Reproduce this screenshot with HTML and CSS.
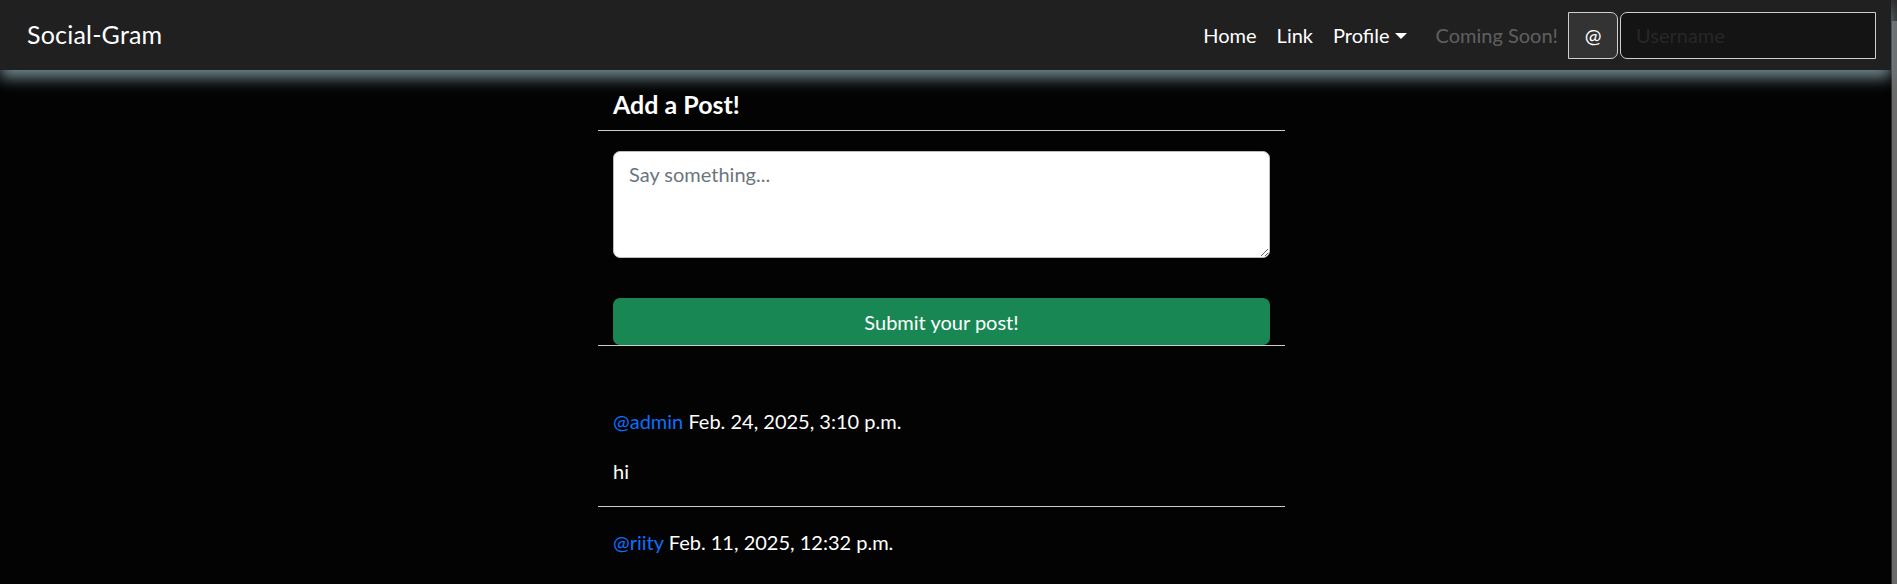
FILE: index.html
```html
<!DOCTYPE html>
<html lang="en">
<head>
<meta charset="utf-8">
<title>Social-Gram</title>
<link rel="stylesheet" href="styles.css">
</head>
<body>
<div class="page">
  <nav class="navbar">
    <a class="brand" href="#">Social-Gram</a>
    <ul class="nav">
      <li><a class="nav-link" href="#">Home</a></li>
      <li><a class="nav-link" href="#">Link</a></li>
      <li><a class="nav-link dropdown" href="#">Profile</a></li>
      <li><span class="nav-link disabled">Coming Soon!</span></li>
    </ul>
    <form class="input-group">
      <span class="addon">@</span>
      <input class="user-input" type="text" placeholder="Username">
    </form>
  </nav>
  <main class="main">
    <div class="column">
      <h5 class="title">Add a Post!</h5>
      <hr class="rule">
      <form class="post-form">
        <textarea class="textarea" placeholder="Say something..."></textarea>
        <button class="submit" type="button">Submit your post!</button>
      </form>
      <hr class="rule">
      <div class="posts">
        <div class="post">
          <p class="meta"><a class="user" href="#">@admin</a> Feb. 24, 2025, 3:10 p.m.</p>
          <p class="body">hi</p>
        </div>
        <hr class="rule">
        <div class="post">
          <p class="meta"><a class="user" href="#">@riity</a> Feb. 11, 2025, 12:32 p.m.</p>
        </div>
      </div>
    </div>
  </main>
</div>
<div class="rail"><div class="thumb"></div></div>
</body>
</html>
```

FILE: styles.css
```css
* { box-sizing: border-box; }
html, body { height: 100%; }
body {
  margin: 0;
  background: #030303;
  color: #fff;
  font-family: "Lato", "Liberation Sans", sans-serif;
  font-size: 20px;
  line-height: 1.5;
  display: flex;
  overflow: hidden;
}
.page { flex: 1; min-width: 0; }
.rail {
  width: 6px;
  background: #2b2b2b;
  padding-top: 21px;
  padding-left: 1px;
  display: flex;
}
.thumb { flex: 1; background: #6b6b6b; }

.navbar {
  height: 70px;
  background: #202020;
  display: flex;
  align-items: center;
  padding: 0 15px 0 27px;
  box-shadow: 0 8px 14px 0 rgba(112, 135, 142, 1);
  position: relative;
}
.brand {
  color: #fff;
  text-decoration: none;
  font-size: 25px;
  line-height: 1.5;
  letter-spacing: 0.2px;
}
.nav {
  list-style: none;
  margin: 0 0 0 auto;
  padding: 0;
  display: flex;
  align-items: center;
}
.nav-link {
  display: block;
  padding: 0 10px;
  color: #fff;
  text-decoration: none;
  line-height: 30px;
}
.dropdown::after {
  content: "";
  display: inline-block;
  margin-left: 5px;
  vertical-align: 4px;
  border-top: 6px solid #fff;
  border-left: 6px solid transparent;
  border-right: 6px solid transparent;
}
.nav .disabled { color: rgba(255, 255, 255, 0.3); padding-left: 19px; }
.input-group {
  display: flex;
  margin: 0;
  height: 47px;
}
.addon {
  width: 50px;
  display: flex;
  align-items: center;
  justify-content: center;
  background: #333;
  border: 1px solid #cfcfcf;
  border-radius: 0 7px 7px 0;
  color: #fff;
}
.user-input {
  width: 256px;
  margin-left: 2px;
  background: #141414;
  border: 1px solid #cfcfcf;
  border-radius: 7px 0 0 7px;
  font: inherit;
  color: #fff;
  padding: 0 15px;
}
.user-input::placeholder { color: #272727; }

.main {
  display: flex;
  justify-content: center;
  padding-right: 8px;
}
.column { width: 687px; }
.title {
  margin: 19px 0 0;
  padding-left: 15px;
  font-size: 25px;
  line-height: 30px;
  font-weight: 700;
}
.rule {
  margin: 0;
  border: 0;
  border-top: 1px solid #cdcdcd;
}
.title + .rule { margin-top: 11px; }
.post-form {
  padding: 20px 15px 0;
  display: flex;
  flex-direction: column;
}
.textarea {
  height: 107px;
  width: 100%;
  resize: vertical;
  background: #fff;
  border: 1px solid #bdbdbd;
  border-radius: 7px;
  padding: 7px 15px;
  font: inherit;
  color: #212529;
  display: block;
}
.textarea::placeholder { color: #6c757d; }
.submit {
  margin-top: 40px;
  height: 47px;
  width: 100%;
  background: #198754;
  border: 0;
  border-radius: 7px;
  color: #fff;
  font: inherit;
}
.post { padding: 0 15px; }
.post:first-child { padding-top: 60px; }
.post p { margin: 0 0 20px; }
.posts .rule + .post { padding-top: 20px; }
.user { color: #0d6efd; text-decoration: none; }
```
